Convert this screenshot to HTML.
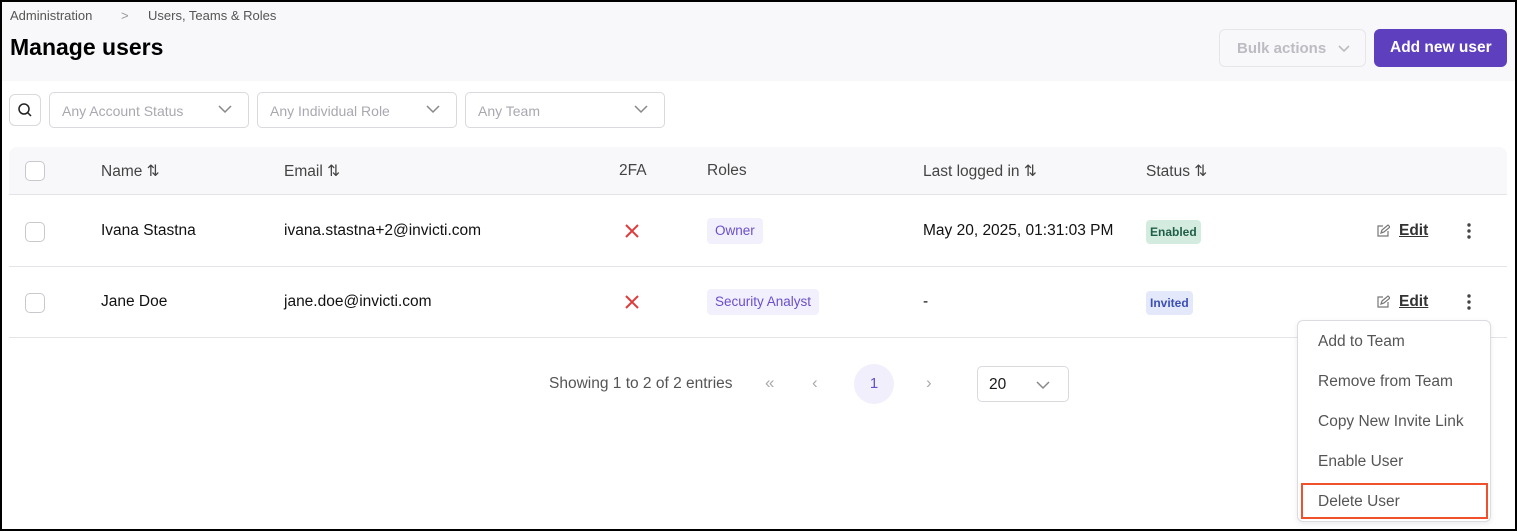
<!DOCTYPE html>
<html><head><meta charset="utf-8"><style>
*{box-sizing:border-box;margin:0;padding:0}
body{width:1517px;height:531px;position:relative;overflow:hidden;background:#fff;font-family:"Liberation Sans",sans-serif;color:#1a1a1a}
.frame{position:absolute;inset:0;border:2px solid #000;z-index:10;pointer-events:none}
.abs{position:absolute;white-space:nowrap}
.top{position:absolute;left:0;top:0;width:1517px;height:81px;background:#f8f8fa}
.sel{position:absolute;top:92px;height:36px;border:1px solid #d9d9de;border-radius:5px;background:#fff;font-size:14px;color:#a8a8b0;padding:10px 12px}
.chev{position:absolute;right:16px;top:12px}
.hdr{position:absolute;left:9px;top:147px;width:1498px;height:48px;background:#f8f8fa;border-radius:8px 8px 0 0;border-bottom:1px solid #e4e4e8}
.line{position:absolute;left:9px;width:1498px;height:1px;background:#e4e4e8}
.cb{position:absolute;width:20px;height:20px;border:1px solid #c8c8cf;border-radius:5px;background:#fff}
.h{font-size:15.5px;color:#444}
.c{font-size:15.5px;color:#111}
.tag{position:absolute;height:26px;border-radius:4px;font-size:13.5px;padding:5px 8px}
.menu{position:absolute;left:1297px;top:320px;width:194px;height:202px;border:1px solid #dcdce0;border-radius:6px;background:#fff;box-shadow:0 2px 6px rgba(0,0,0,.08)}
.mi{position:absolute;left:20px;font-size:15.5px;color:#555}
</style></head><body>
<div class="top"></div>
<div class="abs" style="left:10px;top:8px;font-size:13px;color:#555">Administration</div>
<div class="abs" style="left:121px;top:8px;font-size:13px;color:#999">&gt;</div>
<div class="abs" style="left:148px;top:8px;font-size:13px;color:#555">Users, Teams &amp; Roles</div>
<div class="abs" style="left:10px;top:34px;font-size:23px;font-weight:bold;color:#000">Manage users</div>
<div class="abs" style="left:1219px;top:29px;width:147px;height:38px;border:1px solid #e6e6ea;border-radius:6px;font-size:15px;font-weight:bold;color:#bcbcc2;padding:10px 0 0 17px">Bulk actions <svg width="12" height="8" style="margin-left:8px" viewBox="0 0 12 8"><path d="M1 1l5 5 5-5" fill="none" stroke="#bcbcc2" stroke-width="1.6"/></svg></div>
<div class="abs" style="left:1374px;top:29px;width:133px;height:38px;background:#5e3fbe;border-radius:6px;font-size:15.5px;font-weight:bold;color:#fff;padding:10px 0 0 16px">Add new user</div>

<div class="abs" style="left:9px;top:94px;width:32px;height:32px;border:1px solid #d9d9de;border-radius:6px;background:#fff"><svg width="16" height="16" style="position:absolute;left:7px;top:7px" viewBox="0 0 16 16"><circle cx="7" cy="7" r="5" fill="none" stroke="#222" stroke-width="1.5"/><path d="M10.5 10.5l3.5 3.5" stroke="#222" stroke-width="1.5"/></svg></div>
<div class="sel" style="left:49px;width:200px">Any Account Status<svg class="chev" width="14" height="9" viewBox="0 0 14 9"><path d="M1 1l6 6 6-6" fill="none" stroke="#888" stroke-width="1.5"/></svg></div>
<div class="sel" style="left:257px;width:200px">Any Individual Role<svg class="chev" width="14" height="9" viewBox="0 0 14 9"><path d="M1 1l6 6 6-6" fill="none" stroke="#888" stroke-width="1.5"/></svg></div>
<div class="sel" style="left:465px;width:200px">Any Team<svg class="chev" width="14" height="9" viewBox="0 0 14 9"><path d="M1 1l6 6 6-6" fill="none" stroke="#888" stroke-width="1.5"/></svg></div>

<div class="hdr"></div>
<div class="cb" style="left:25px;top:161px"></div>
<div class="abs h" style="left:101px;top:162px">Name ⇅</div>
<div class="abs h" style="left:284px;top:162px">Email ⇅</div>
<div class="abs h" style="left:619px;top:162px">2FA</div>
<div class="abs h" style="left:707px;top:162px">Roles</div>
<div class="abs h" style="left:923px;top:162px">Last logged in ⇅</div>
<div class="abs h" style="left:1146px;top:162px">Status ⇅</div>

<div class="cb" style="left:25px;top:222px"></div>
<div class="abs c" style="left:101px;top:222px">Ivana Stastna</div>
<div class="abs c" style="left:284px;top:222px">ivana.stastna+2@invicti.com</div>
<svg class="abs" style="left:624px;top:223px" width="16" height="16" viewBox="0 0 16 16"><path d="M2 2l12 12M14 2L2 14" stroke="#e03a3a" stroke-width="2"/></svg>
<div class="tag" style="left:707px;top:218px;background:#f3f0fd;color:#6a4fc9">Owner</div>
<div class="abs c" style="left:923px;top:222px">May 20, 2025, 01:31:03 PM</div>
<div class="tag" style="left:1146px;top:220px;height:24px;padding:5px 4px;font-size:12px;background:#d4ecdf;color:#1f5e48;font-weight:bold">Enabled</div>
<div class="line" style="top:266px"></div>

<div class="cb" style="left:25px;top:293px"></div>
<div class="abs c" style="left:101px;top:293px">Jane Doe</div>
<div class="abs c" style="left:284px;top:293px">jane.doe@invicti.com</div>
<svg class="abs" style="left:624px;top:294px" width="16" height="16" viewBox="0 0 16 16"><path d="M2 2l12 12M14 2L2 14" stroke="#e03a3a" stroke-width="2"/></svg>
<div class="tag" style="left:707px;top:289px;background:#f3f0fd;color:#6a4fc9">Security Analyst</div>
<div class="abs c" style="left:923px;top:293px">-</div>
<div class="tag" style="left:1146px;top:291px;height:24px;padding:5px 4px;font-size:12px;background:#e4e8fb;color:#3b4fb5;font-weight:bold">Invited</div>
<div class="line" style="top:337px"></div>

<svg class="abs" style="left:1376px;top:224px" width="14" height="14" viewBox="0 0 14 14"><path d="M7 2H2v10h10V7M5 9l1-3 6-5 2 2-6 5z" fill="none" stroke="#777" stroke-width="1.2"/></svg>
<div class="abs" style="left:1399px;top:222px;font-size:15.5px;font-weight:bold;color:#333;text-decoration:underline">Edit</div>
<svg class="abs" style="left:1466px;top:222px" width="6" height="18"><circle cx="3" cy="3" r="1.7" fill="#444"/><circle cx="3" cy="9" r="1.7" fill="#444"/><circle cx="3" cy="15" r="1.7" fill="#444"/></svg>
<svg class="abs" style="left:1376px;top:295px" width="14" height="14" viewBox="0 0 14 14"><path d="M7 2H2v10h10V7M5 9l1-3 6-5 2 2-6 5z" fill="none" stroke="#777" stroke-width="1.2"/></svg>
<div class="abs" style="left:1399px;top:293px;font-size:15.5px;font-weight:bold;color:#333;text-decoration:underline">Edit</div>
<svg class="abs" style="left:1466px;top:293px" width="6" height="18"><circle cx="3" cy="3" r="1.7" fill="#444"/><circle cx="3" cy="9" r="1.7" fill="#444"/><circle cx="3" cy="15" r="1.7" fill="#444"/></svg>

<div class="abs" style="left:549px;top:375px;font-size:15.5px;color:#555">Showing 1 to 2 of 2 entries</div>
<div class="abs" style="left:765px;top:373px;font-size:17px;color:#aaa">«</div>
<div class="abs" style="left:812px;top:373px;font-size:17px;color:#aaa">‹</div>
<div class="abs" style="left:854px;top:364px;width:40px;height:40px;border-radius:50%;background:#f1effc;color:#6a4fc9;font-size:15px;text-align:center;line-height:40px">1</div>
<div class="abs" style="left:926px;top:373px;font-size:17px;color:#aaa">›</div>
<div class="abs" style="left:977px;top:366px;width:92px;height:36px;border:1px solid #d9d9de;border-radius:5px;font-size:15.5px;padding:9px 11px">20<svg style="position:absolute;right:18px;top:14px" width="14" height="9" viewBox="0 0 14 9"><path d="M1 1l6 6 6-6" fill="none" stroke="#888" stroke-width="1.5"/></svg></div>

<div class="menu">
<div class="mi" style="top:12px">Add to Team</div>
<div class="mi" style="top:52px">Remove from Team</div>
<div class="mi" style="top:92px">Copy New Invite Link</div>
<div class="mi" style="top:132px">Enable User</div>
<div class="mi" style="top:172px">Delete User</div>
<div style="position:absolute;left:3px;top:162px;width:187px;height:36px;border:2px solid #f0502a"></div>
</div>
<div class="frame"></div>
</body></html>
